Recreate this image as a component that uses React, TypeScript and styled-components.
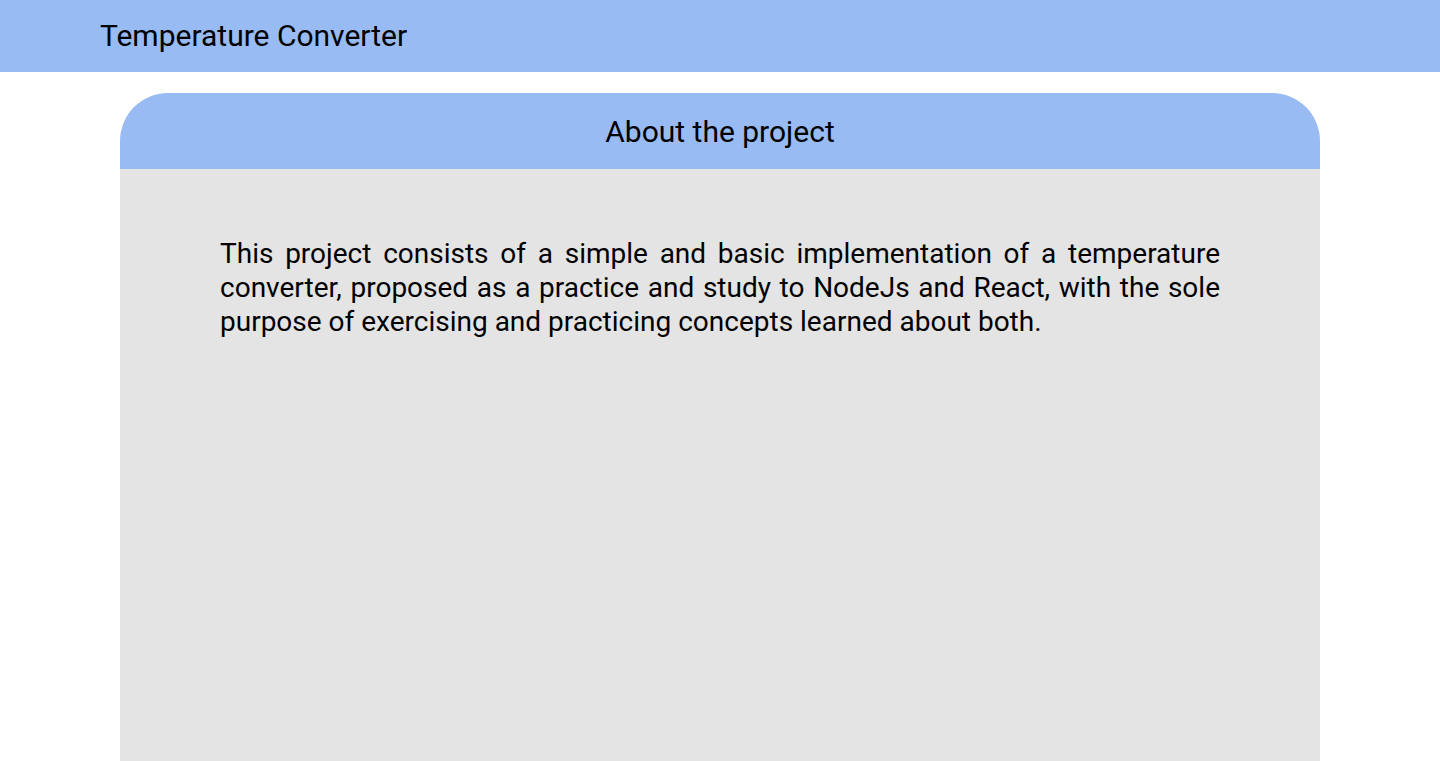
import React from "react";
import styled, { createGlobalStyle } from "styled-components";

const GlobalStyle = createGlobalStyle`
  html, body {
    margin: 0;
    padding: 0;
    background: #fff;
    font-family: Roboto, "Liberation Sans", sans-serif;
    color: #000;
  }
`;

const App = () => {
  return (
    <>
      <GlobalStyle />
      <Header>
        <Logo>Temperature Converter</Logo>
      </Header>
      <Card>
        <CardHeader>About the project</CardHeader>
        <CardBody>
          <Description>
            This project consists of a simple and basic implementation of a
            temperature converter, proposed as a practice and study to NodeJs
            and React, with the sole purpose of exercising and practicing
            concepts learned about both.
          </Description>
        </CardBody>
      </Card>
    </>
  );
};

export default App;

const Header = styled.header`
  height: 72px;
  background-color: #99bbf3;
  display: flex;
  align-items: center;
  padding-left: 100px;
`;

const Logo = styled.div`
  font-size: 30px;
  margin-top: -2px;
`;

const Card = styled.main`
  width: 1200px;
  margin: 21px auto 0;
  display: flex;
  flex-direction: column;
  min-height: calc(100vh - 93px);
`;

const CardHeader = styled.div`
  height: 76px;
  background-color: #99bbf3;
  border-radius: 48px 48px 0 0;
  display: flex;
  align-items: center;
  justify-content: center;
  font-size: 30px;
`;

const CardBody = styled.div`
  flex: 1;
  background-color: #e4e4e4;
  padding: 68px 100px;
`;

const Description = styled.p`
  margin: 0;
  font-size: 28px;
  line-height: 34px;
  text-align: justify;
`;
